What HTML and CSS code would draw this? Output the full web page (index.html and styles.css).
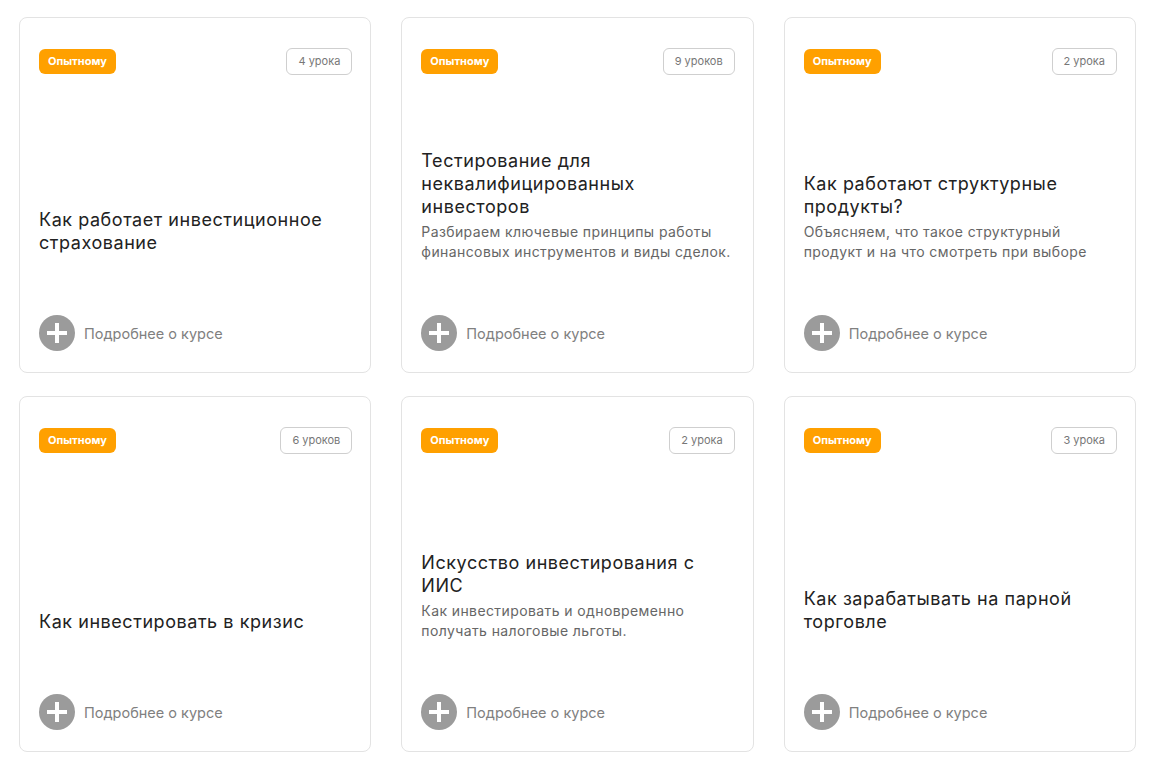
FILE: index.html
```html
<!DOCTYPE html>
<html lang="ru">
<head>
    <meta charset="UTF-8">
    <meta name="viewport" content="width=device-width, initial-scale=1.0">
    <title>Курсы</title>
    <link rel="stylesheet" href="styles.css">
</head>
<body>
    <div class="courses">
        <div class="card">
            <div class="card-top">
                <span class="level">Опытному</span>
                <span class="lessons">4 урока</span>
            </div>
            <div class="card-body">
                <h3 class="card-title">Как работает инвестиционное страхование</h3>
            </div>
            <a class="more" href="#"><span class="plus"></span>Подробнее о курсе</a>
        </div>
        <div class="card">
            <div class="card-top">
                <span class="level">Опытному</span>
                <span class="lessons">9 уроков</span>
            </div>
            <div class="card-body">
                <h3 class="card-title">Тестирование для неквалифицированных инвесторов</h3>
                <p class="card-text">Разбираем ключевые принципы работы финансовых инструментов и виды сделок.</p>
            </div>
            <a class="more" href="#"><span class="plus"></span>Подробнее о курсе</a>
        </div>
        <div class="card">
            <div class="card-top">
                <span class="level">Опытному</span>
                <span class="lessons">2 урока</span>
            </div>
            <div class="card-body">
                <h3 class="card-title">Как работают структурные продукты?</h3>
                <p class="card-text">Объясняем, что такое структурный продукт и на что смотреть при выборе</p>
            </div>
            <a class="more" href="#"><span class="plus"></span>Подробнее о курсе</a>
        </div>
        <div class="card">
            <div class="card-top">
                <span class="level">Опытному</span>
                <span class="lessons">6 уроков</span>
            </div>
            <div class="card-body">
                <h3 class="card-title">Как инвестировать в кризис</h3>
            </div>
            <a class="more" href="#"><span class="plus"></span>Подробнее о курсе</a>
        </div>
        <div class="card">
            <div class="card-top">
                <span class="level">Опытному</span>
                <span class="lessons">2 урока</span>
            </div>
            <div class="card-body">
                <h3 class="card-title">Искусство инвестирования с ИИС</h3>
                <p class="card-text">Как инвестировать и одновременно получать налоговые льготы.</p>
            </div>
            <a class="more" href="#"><span class="plus"></span>Подробнее о курсе</a>
        </div>
        <div class="card">
            <div class="card-top">
                <span class="level">Опытному</span>
                <span class="lessons">3 урока</span>
            </div>
            <div class="card-body">
                <h3 class="card-title">Как зарабатывать на парной торговле</h3>
            </div>
            <a class="more" href="#"><span class="plus"></span>Подробнее о курсе</a>
        </div>
    </div>
</body>
</html>
```

FILE: styles.css
```css
body {
    margin: 0;
    font-family: 'Inter', sans-serif;
    background-color: #fff;
    color: #333;
}
.courses {
    display: grid;
    grid-template-columns: repeat(3, 1fr);
    width: 1117px;
    column-gap: 30px;
    row-gap: 23px;
    padding: 17px 19px;
}
.card {
    box-sizing: border-box;
    height: 356px;
    border: 1px solid #e3e3e3;
    border-radius: 8px;
    padding: 30px 18px 21px 19px;
    display: flex;
    flex-direction: column;
}
.card-top {
    display: flex;
    justify-content: space-between;
    align-items: center;
}
.level {
    background-color: #ffa000;
    color: #fff;
    font-size: 11px;
    font-weight: 700;
    line-height: 25px;
    padding: 0 9px;
    border-radius: 6px;
}
.lessons {
    border: 1px solid #cfcfcf;
    border-radius: 6px;
    color: #777;
    font-size: 11px;
    line-height: 25px;
    padding: 0 11px;
}
.card-body {
    margin-top: auto;
    margin-bottom: 53px;
}
.card-title {
    margin: 0 0 4px;
    font-size: 18px;
    font-weight: 400;
    line-height: 23px;
    letter-spacing: 0.55px;
    color: #222;
}
.card-title:last-child {
    margin-bottom: 8px;
}
.card-text {
    margin: 0;
    font-size: 14px;
    line-height: 20px;
    letter-spacing: 0.4px;
    color: #666;
}
.more {
    display: flex;
    align-items: center;
    gap: 9px;
    font-size: 14.5px;
    color: #808080;
    text-decoration: none;
}
.plus {
    position: relative;
    width: 36px;
    height: 36px;
    border-radius: 50%;
    background-color: #9b9b9b;
    flex-shrink: 0;
}
.plus::before,
.plus::after {
    content: "";
    position: absolute;
    left: 50%;
    top: 50%;
    background-color: #fff;
    transform: translate(-50%, -50%);
}
.plus::before {
    width: 20px;
    height: 4px;
}
.plus::after {
    width: 4px;
    height: 20px;
}
```
